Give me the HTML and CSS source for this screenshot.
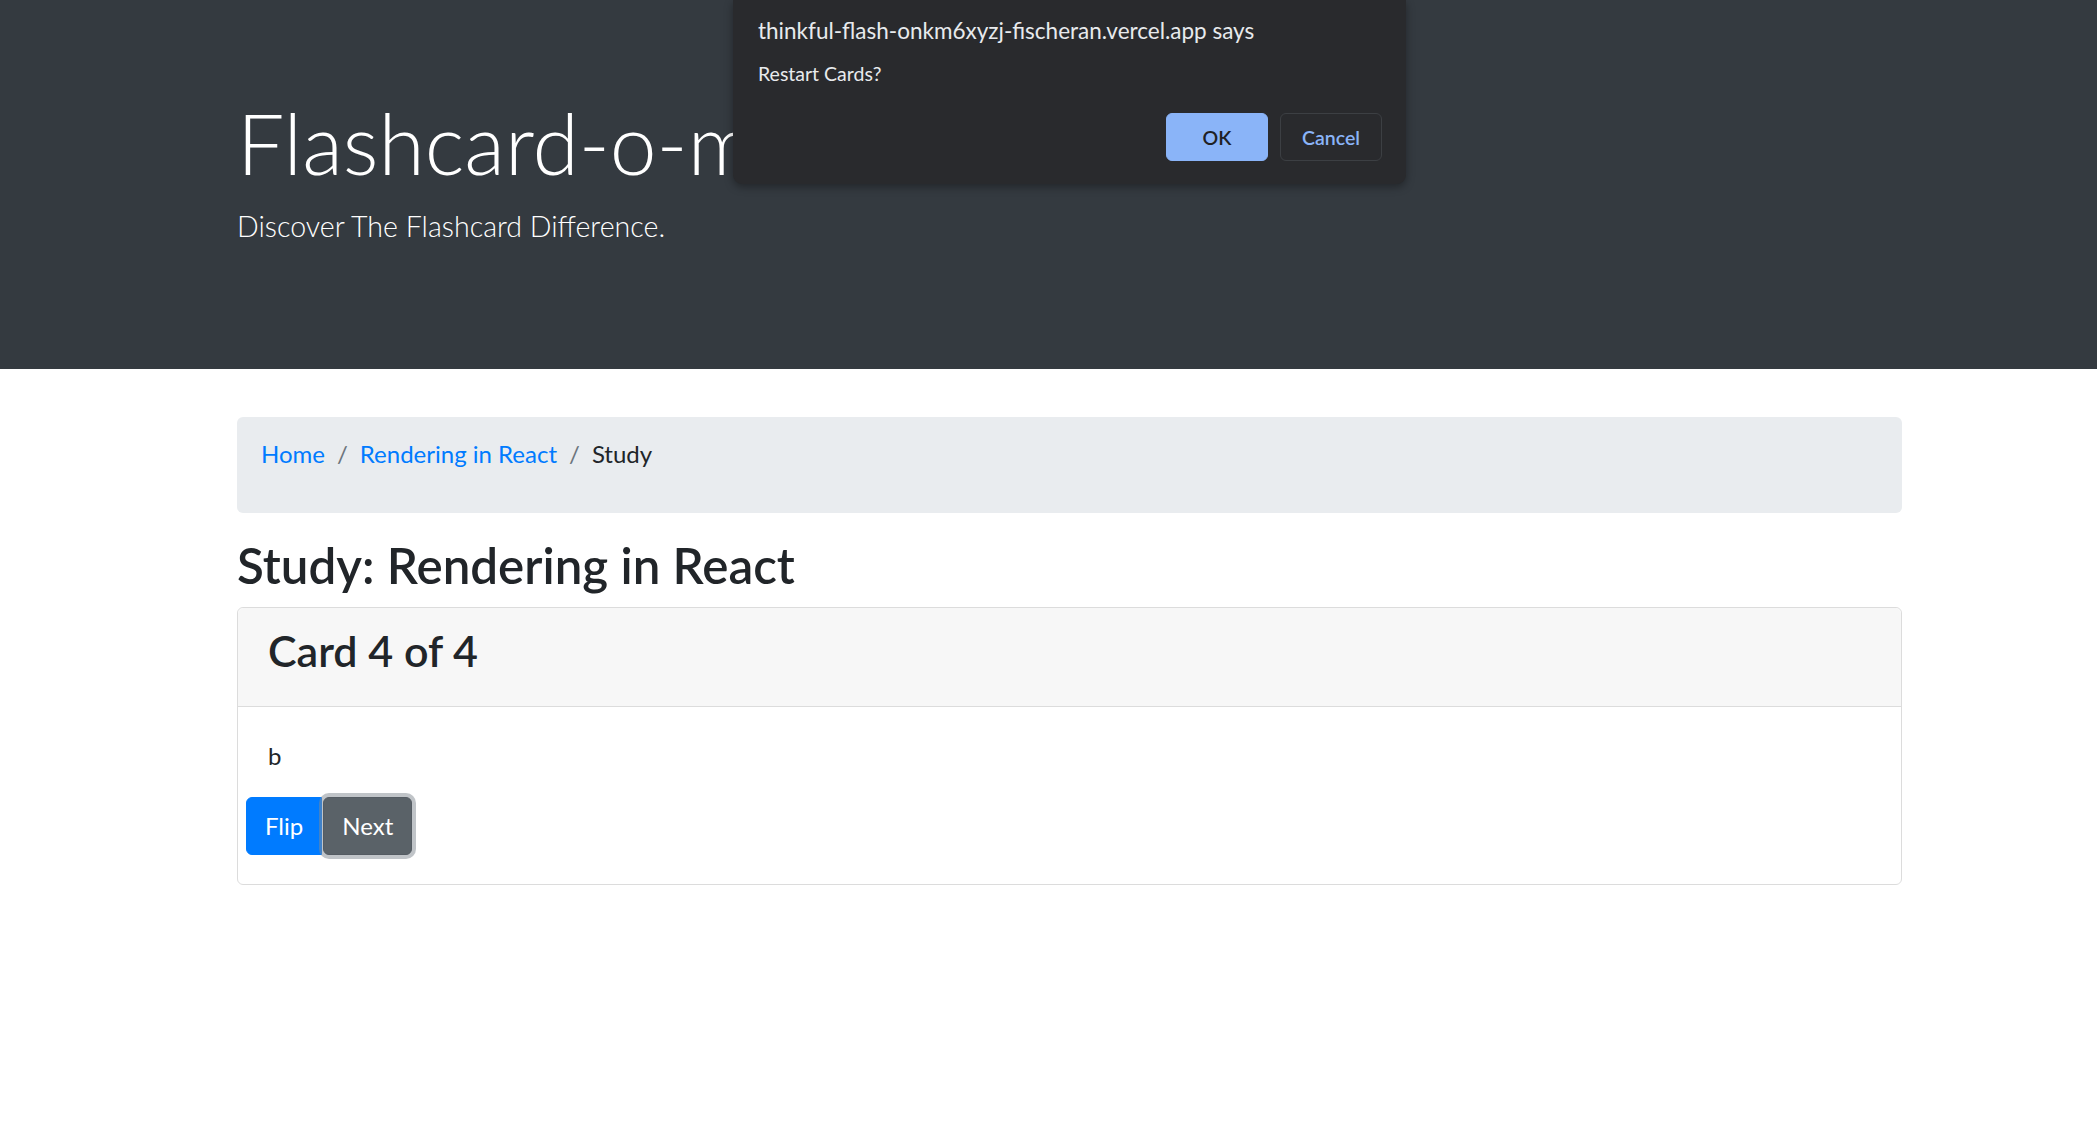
FILE: index.html
```html
<!DOCTYPE html>
<html lang="en">
<head>
<meta charset="utf-8">
<title>Flashcard-o-matic</title>
<link rel="stylesheet" href="styles.css">
</head>
<body>
<header class="jumbotron">
  <div class="container">
    <h1 class="display">Flashcard-o-matic</h1>
    <p class="lead">Discover The Flashcard Difference.</p>
  </div>
</header>
<main class="container">
  <nav class="breadcrumb">
    <ol class="crumbs">
      <li class="crumb"><a href="#">Home</a></li>
      <li class="crumb sep-before"><a href="#">Rendering in React</a></li>
      <li class="crumb sep-before current">Study</li>
    </ol>
  </nav>
  <h2 class="page-title">Study: Rendering in React</h2>
  <section class="card">
    <div class="card-header">
      <h3 class="card-title">Card 4 of 4</h3>
    </div>
    <div class="card-body">
      <p class="card-text">b</p>
      <div class="row">
        <button class="btn btn-primary" type="button">Flip</button><button class="btn btn-secondary focused" type="button">Next</button>
      </div>
    </div>
  </section>
</main>

<div class="dialog" role="alertdialog">
  <div class="dialog-title">thinkful-flash-onkm6xyzj-fischeran.vercel.app says</div>
  <div class="dialog-message">Restart Cards?</div>
  <div class="dialog-actions">
    <button class="dbtn dbtn-ok" type="button">OK</button>
    <button class="dbtn dbtn-cancel" type="button">Cancel</button>
  </div>
</div>
</body>
</html>
```

FILE: styles.css
```css
* { box-sizing: border-box; }

html, body {
  margin: 0;
  padding: 0;
  background: #fff;
}

body {
  font-family: Lato, "Open Sans", "Noto Sans", sans-serif;
  color: #212529;
  font-size: 24px;
  line-height: 36px;
}

.container {
  width: 1665px;
  margin-left: 237px;
}

/* Jumbotron */
.jumbotron {
  background: #343a40;
  color: #fff;
  height: 369px;
  padding-top: 93px;
  margin-bottom: 48px;
}

.display {
  margin: 0 0 10px;
  font-size: 84px;
  font-weight: 300;
  line-height: 100.8px;
}

.lead {
  margin: 0;
  font-size: 28.6px;
  font-weight: 300;
  line-height: 45px;
}

/* Breadcrumb */
.breadcrumb {
  background: #e9ecef;
  border-radius: 6px;
  padding: 19px 24px 17px;
  margin-bottom: 24px;
}

.crumbs {
  list-style: none;
  margin: 0 0 24px;
  padding: 0;
  display: flex;
}

.crumb a {
  color: #007bff;
  text-decoration: none;
}

.sep-before::before {
  content: "/";
  color: #6c757d;
  padding: 0 12px;
}

.current { color: #212529; }

/* Headings */
.page-title {
  margin: 0 0 12px;
  font-size: 49.3px;
  font-weight: 600;
  line-height: 57.6px;
}

/* Card */
.card {
  border: 1px solid #dcdcdc;
  border-radius: 6px;
}

.card-header {
  background: #f7f7f7;
  border-bottom: 1px solid #dcdcdc;
  border-radius: 6px 6px 0 0;
  padding: 18px 30px;
}

.card-title {
  margin: 0 0 12px;
  font-size: 43px;
  font-weight: 600;
  line-height: 50.4px;
}

.card-body {
  padding: 31px 30px 29px;
}

.card-text {
  margin: 0 0 23px;
}

.row {
  display: flex;
  margin-left: -22px;
}

.btn {
  font-family: inherit;
  font-size: 24px;
  line-height: 36px;
  padding: 10px 18px;
  border: 1px solid transparent;
  color: #fff;
  cursor: pointer;
}

.btn-primary {
  background: #007bff;
  border-color: #007bff;
  border-radius: 6px 0 0 6px;
}

.btn-secondary {
  background: #5a6268;
  border-color: #545b62;
  border-radius: 6px;
  margin-left: 1px;
}

.focused {
  box-shadow: 0 0 0 4px rgba(130, 138, 145, 0.5);
  position: relative;
}

/* Browser alert dialog overlay */
.dialog {
  position: absolute;
  left: 733px;
  top: 0;
  width: 673px;
  height: 184px;
  background: #292a2d;
  border-radius: 0 0 9px 9px;
  box-shadow: 0 3px 8px rgba(0, 0, 0, 0.35);
  padding: 16px 24px 0 25px;
  color: #e8eaed;
  display: flex;
  flex-direction: column;
}

.dialog-title {
  font-size: 22.5px;
  line-height: 30px;
}

.dialog-message {
  margin-top: 14px;
  font-size: 19.5px;
  line-height: 27px;
}

.dialog-actions {
  margin-top: 26px;
  display: flex;
  justify-content: flex-end;
  gap: 12px;
}

.dbtn {
  width: 102px;
  height: 48px;
  border-radius: 6px;
  font-family: inherit;
  font-size: 19.5px;
  font-weight: 600;
  cursor: pointer;
}

.dbtn-ok {
  background: #8ab4f8;
  border: 1px solid #8ab4f8;
  color: #202124;
}

.dbtn-cancel {
  background: transparent;
  border: 1px solid #3c3f43;
  color: #8ab4f8;
}
```
